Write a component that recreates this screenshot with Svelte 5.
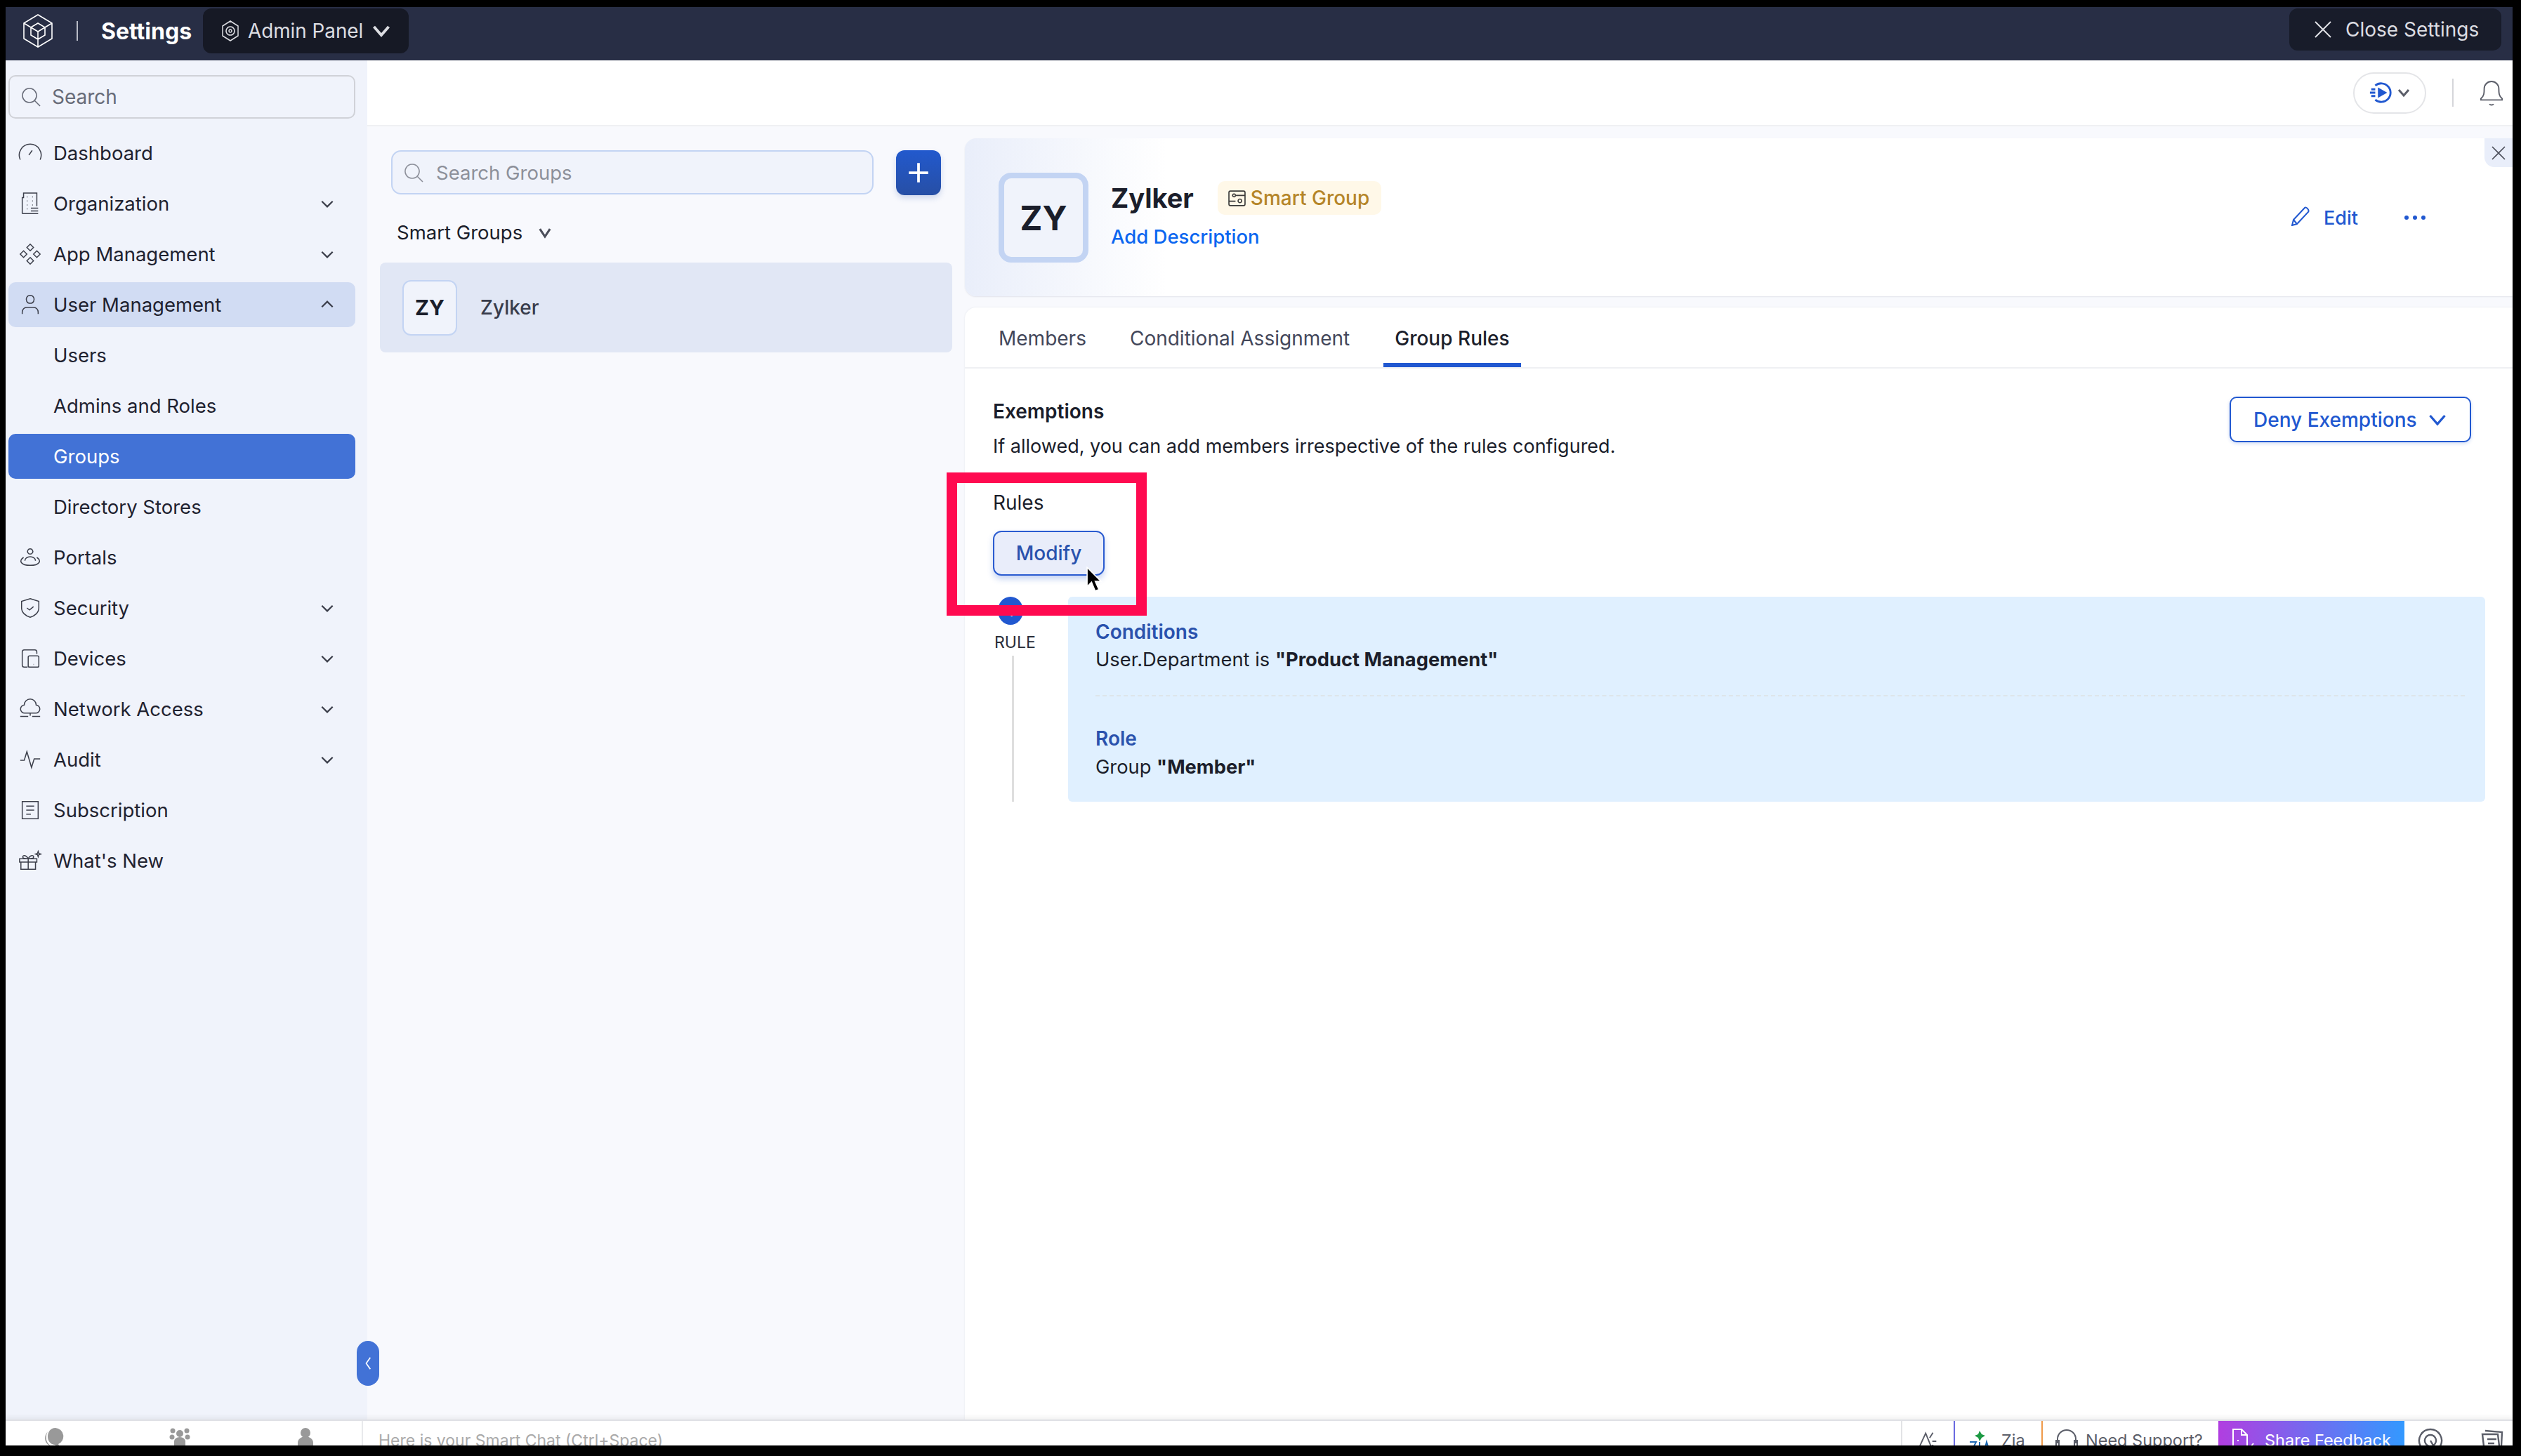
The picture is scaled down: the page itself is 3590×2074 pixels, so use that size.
<script>
  const nav = [
    { label: "Dashboard", icon: "dash" },
    { label: "Organization", icon: "org", arrow: "down" },
    { label: "App Management", icon: "app", arrow: "down" },
    { label: "User Management", icon: "user", arrow: "up", open: true },
    { label: "Users", sub: true },
    { label: "Admins and Roles", sub: true },
    { label: "Groups", sub: true, active: true },
    { label: "Directory Stores", sub: true },
    { label: "Portals", icon: "portal" },
    { label: "Security", icon: "shield", arrow: "down" },
    { label: "Devices", icon: "device", arrow: "down" },
    { label: "Network Access", icon: "cloud", arrow: "down" },
    { label: "Audit", icon: "audit", arrow: "down" },
    { label: "Subscription", icon: "receipt" },
    { label: "What's New", icon: "gift" }
  ];

  const paths = {
    dash: "M3 28A16.500 16.500 0 1 1 33 28M16 21l5-7",
    org: "M6 33V9h2V2h20v20M6 33h8M19 25h11M19 29h11M14 33h16M13 8h1M21 8h1M13 14h1M21 14h1M13 20h1M21 20h1M13 26h1",
    app: "M18 3l5 5-5 5-5-5zM18 23l5 5-5 5-5-5zM8 13l5 5-5 5-5-5zM28 13l5 5-5 5-5-5z",
    user: "M18 4a6 6 0 1 1-.01 0M6 32v-3a7 7 0 0 1 7-7h10a7 7 0 0 1 7 7v3",
    portal: "M18 5a4 4 0 1 1-.01 0M10 23a8 6 0 0 1 16 0M8 18c-8 5-4 12 10 12s18-7 10-12",
    shield: "M18 4l13 4v10c0 7-6 12-13 14C11 30 5 25 5 18V8zM13 18l4 3 6-5",
    device: "M14 31H9a3 3 0 0 1-3-3V8a3 3 0 0 1 3-3h16a3 3 0 0 1 3 3v3M17 14h12a2 2 0 0 1 2 2v13a2 2 0 0 1-2 2H17a2 2 0 0 1-2-2V16a2 2 0 0 1 2-2zM23 27h.5",
    cloud: "M10 24a6 6 0 0 1-1-12 9 9 0 0 1 18 0 6 6 0 0 1-1 12zM18 24v4M3 29h12M21 29h12",
    audit: "M3 19h6l4-13 7 24 4-13h9",
    receipt: "M6 5h24v26H6zM12 12h12M12 18h12M12 24h7",
    gift: "M4 20h22v11H4zM2 15h26v5H2zM15 15v16M15 15c-3-6-9-6-8-2 0 2 4 2 8 2zM15 15c3-6 9-6 8-2 0 2-4 2-8 2zM30 4l1 3 3 1-3 1-1 3-1-3-3-1 3-1z"
  };
</script>

{#snippet chevron(dir)}
  <svg class="chev" viewBox="0 0 20 20" class:flip={dir === "up"}><path d="M3 7l7 7 7-7" /></svg>
{/snippet}

<div class="shell">
  <header class="top">
    <svg class="logo" viewBox="0 0 44 48"><path d="M22 1l20 12v22L22 47 2 35V13zM2 13l20 12 20-12M22 25v22M12 19l10-6 10 6-10 6zM12 19v11l10 6 10-6V19" /></svg>
    <span class="sep"></span>
    <span class="title">Settings</span>
    <div class="panel-pick">
      <svg viewBox="0 0 26 30"><path d="M13 1l11 7v14l-11 7-11-7V8zM13 9a6 6 0 1 1-.01 0M13 13a2 2 0 1 1-.01 0" /></svg>
      <span>Admin Panel</span>
      <svg class="pick-chev" viewBox="0 0 20 20"><path d="M3 6l7 8 7-8" /></svg>
    </div>
    <div class="close-btn">
      <svg viewBox="0 0 24 24"><path d="M1 1l22 22M23 1L1 23" /></svg>
      <span>Close Settings</span>
    </div>
  </header>

  <div class="middle">
    <aside class="sidebar">
      <div class="side-search">
        <svg class="search-ic" viewBox="0 0 28 28"><path d="M12 2a10 10 0 1 1-.01 0M19 19l8 8" /></svg>
        <span>Search</span>
      </div>
      <nav>
        {#each nav as item}
          <div class="row" class:open={item.open} class:active={item.active}>
            {#if item.icon}
              <svg class="row-ic" viewBox="0 0 36 36"><path d={paths[item.icon]} /></svg>
            {/if}
            <span class="row-label" class:sub={item.sub}>{item.label}</span>
            {#if item.arrow}
              {@render chevron(item.arrow)}
            {/if}
          </div>
        {/each}
      </nav>
      <div class="collapse">
        <svg viewBox="0 0 12 24"><path d="M10 2L3 12l7 10" /></svg>
      </div>
    </aside>

    <main class="main">
      <div class="utility">
        <div class="play-pill">
          <svg class="play" viewBox="0 0 36 36"><path d="M10 7.300A14 14 0 1 1 10 28.700" class="ring" /><path d="M14 10l14 8-14 8z" class="fill" /><path d="M4 13h6M2 18h8M4 23h6" class="ring" /></svg>
          <svg class="play-chev" viewBox="0 0 20 20"><path d="M3 6l7 8 7-8" /></svg>
        </div>
        <span class="util-sep"></span>
        <svg class="bell" viewBox="0 0 36 42"><path d="M2 30c5-4 5-9 5-15a11 11 0 0 1 22 0c0 6 0 11 5 15v2H2zM15 38c1 2 5 2 6 0" /></svg>
      </div>

      <div class="work">
        <section class="groups">
          <div class="group-tools">
            <div class="group-search">
              <svg class="search-ic" viewBox="0 0 28 28"><path d="M12 2a10 10 0 1 1-.01 0M19 19l8 8" /></svg>
              <span>Search Groups</span>
            </div>
            <div class="add"><svg viewBox="0 0 24 24"><path d="M12 1v22M1 12h22" /></svg></div>
          </div>
          <div class="group-type">
            <span>Smart Groups</span>
            <svg viewBox="0 0 20 20"><path d="M4 6l6 9 6-9" /></svg>
          </div>
          <div class="group-row">
            <div class="mini-av">ZY</div>
            <span>Zylker</span>
          </div>
        </section>

        <section class="detail">
          <div class="head-card">
            <div class="big-av"><span>ZY</span></div>
            <div class="head-text">
              <div class="name-line">
                <h1>Zylker</h1>
                <div class="badge">
                  <svg viewBox="0 0 24 24"><path d="M3 2h18a2 2 0 0 1 2 2v16a2 2 0 0 1-2 2H3a2 2 0 0 1-2-2V4a2 2 0 0 1 2-2zM10 8h13M8 6a2 2 0 1 1-.01 0M1 16h9M16 13a2.500 2.500 0 1 1-.01 0" /></svg>
                  <span>Smart Group</span>
                </div>
              </div>
              <div class="add-desc">Add Description</div>
            </div>
            <div class="head-actions">
              <svg class="pencil" viewBox="0 0 28 28"><path d="M1 27l2-8L19 2c2-2 7 3 5 6L8 25zM3 19l5 6" /></svg>
              <span class="edit">Edit</span>
              <span class="dots"><i></i><i></i><i></i></span>
            </div>
            <div class="head-x"><svg viewBox="0 0 20 20"><path d="M1 1l18 18M19 1L1 19" /></svg></div>
          </div>

          <div class="rules-card">
            <div class="tabs">
              <div class="tab">Members</div>
              <div class="tab">Conditional Assignment</div>
              <div class="tab current">Group Rules</div>
            </div>
            <div class="content">
              <div class="exempt">
                <div>
                  <h2>Exemptions</h2>
                  <p>If allowed, you can add members irrespective of the rules configured.</p>
                </div>
                <div class="deny">
                  <span>Deny Exemptions</span>
                  <svg viewBox="0 0 20 20"><path d="M3 6l7 8 7-8" /></svg>
                </div>
              </div>
              <div class="rules-title">Rules</div>
              <button class="modify">Modify</button>
              <div class="rule">
                <div class="rule-side">
                  <div class="num">1</div>
                  <div class="rule-tag">RULE</div>
                  <div class="rule-line"></div>
                </div>
                <div class="rule-box">
                  <h3>Conditions</h3>
                  <p>User.Department is <b>"Product Management"</b></p>
                  <div class="dash"></div>
                  <h3 class="role">Role</h3>
                  <p class="role-val">Group <b>"Member"</b></p>
                </div>
              </div>
              <div class="highlight"></div>
              <svg class="cursor" viewBox="0 0 22 34"><path d="M2 1v26l6-6 5 12 5-2-5-11h8z" /></svg>
            </div>
          </div>
        </section>
      </div>
    </main>
  </div>

  <footer class="foot">
    <div class="foot-left">
      <svg viewBox="0 0 30 32"><path d="M17 1a12 12 0 0 1 4 23l3 6-8-5C2 24 3 1 17 1zM6 6C0 13 1 22 8 26l-2 5 6-4C3 24 2 13 6 6z" /></svg>
      <svg viewBox="0 0 30 32"><circle cx="15" cy="9" r="5" /><circle cx="5" cy="5" r="3.500" /><circle cx="25" cy="5" r="3.500" /><circle cx="4" cy="14" r="3.500" /><circle cx="26" cy="14" r="3.500" /><path d="M7 32v-12a8 6 0 0 1 16 0v12z" /></svg>
      <svg viewBox="0 0 30 32"><circle cx="15" cy="8" r="7" /><path d="M4 32v-10a11 9 0 0 1 22 0v10z" /></svg>
    </div>
    <div class="foot-chat">Here is your Smart Chat (Ctrl+Space)</div>
    <div class="foot-cell megaphone">
      <svg viewBox="0 0 36 36"><path d="M3 31L14 7l9 22zM3 31l5 3 7-3M20 14l5-8M24 19h6M23 25l5 2" /></svg>
    </div>
    <div class="foot-cell zia">
      <svg viewBox="0 0 32 36"><path d="M2 20h9L3 36M16 20v16M22 36l4-16 5 16" class="zia-blue" /><path d="M16 4l3 5 5 2-5 3-3 5-2-5-5-3 5-2z" class="zia-green" /></svg>
      <span>Zia</span>
    </div>
    <div class="foot-cell support">
      <svg viewBox="0 0 34 36"><path d="M4 22V16a13 13 0 0 1 26 0v6" /><path d="M2 18h4v14H2zM28 18h4v14h-4z" /></svg>
      <span>Need Support?</span>
    </div>
    <div class="foot-cell share">
      <svg viewBox="0 0 34 36"><path d="M3 2h12l8 8v24H3zM15 2v8h8M9 18h2M9 26h8M24 32l8-10" /></svg>
      <span>Share Feedback</span>
    </div>
    <div class="foot-end">
      <svg viewBox="0 0 36 36"><path d="M18 2a16 16 0 1 0 .01 0M18 10a8 8 0 1 0 .01 0M18 18l7 12" /></svg>
      <svg viewBox="0 0 36 36"><path d="M5 9h22l3 25H8zM9 4l24 2-1 20M12 16h13M13 22h9" /></svg>
    </div>
  </footer>
</div>

<style>
  :global(body) {
    background: #000;
    height: 2074px;
    overflow: hidden;
    font-family: Inter, "Liberation Sans", sans-serif;
    color: #1b1e2b;
  }

  svg {
    fill: none;
    stroke: currentColor;
    stroke-width: 2;
    flex: none;
  }

  h1, h2, h3, p {
    margin: 0;
  }

  .shell {
    margin: 10px 12px 0 8px;
    height: 2049px;
    display: flex;
    flex-direction: column;
    background: #fff;
    overflow: hidden;
  }

  .top {
    height: 76px;
    flex: none;
    box-sizing: border-box;
    padding-bottom: 8px;
    background: #282e45;
    display: flex;
    align-items: center;
    color: #fff;
  }

  .logo {
    width: 44px;
    height: 48px;
    margin-left: 24px;
    stroke-width: 1.6;
  }

  .sep {
    width: 2px;
    height: 28px;
    background: #b9bcc6;
    margin: 0 33px;
  }

  .title {
    font-size: 32px;
    font-weight: 700;
    width: 145px;
  }

  .panel-pick {
    width: 293px;
    height: 64px;
    background: #161925;
    border-radius: 12px;
    display: flex;
    align-items: center;
    color: #dcdde2;
    font-size: 27.8px;
    box-sizing: border-box;
    padding-left: 26px;
  }

  .panel-pick svg {
    width: 26px;
    height: 30px;
    margin-right: 12px;
    stroke-width: 1.5;
  }

  .panel-pick .pick-chev {
    width: 30px;
    height: 30px;
    margin: 0 0 0 11px;
    stroke-width: 2.6;
  }

  .close-btn {
    margin-left: auto;
    margin-right: 16px;
    margin-top: -4px;
    width: 302px;
    height: 60px;
    box-sizing: border-box;
    padding-left: 36px;
    background: #181c2a;
    border-radius: 12px;
    display: flex;
    align-items: center;
    gap: 20px;
    font-size: 28px;
    color: #dcdde2;
  }

  .close-btn svg {
    width: 24px;
    height: 24px;
  }

  .middle {
    flex: 1;
    min-height: 0;
    display: flex;
  }

  .sidebar {
    width: 515px;
    flex: none;
    box-sizing: border-box;
    padding: 21px 17px 0 4px;
    background: #f0f3fb;
    position: relative;
  }

  .side-search {
    height: 62px;
    box-sizing: border-box;
    border: 2px solid #d0d2d8;
    border-radius: 10px;
    display: flex;
    align-items: center;
    gap: 16px;
    padding-left: 16px;
    font-size: 28px;
    color: #676b78;
  }

  .search-ic {
    width: 28px;
    height: 28px;
    stroke-width: 1.6;
  }

  nav {
    margin-top: 17px;
    display: flex;
    flex-direction: column;
    gap: 8px;
  }

  .row {
    height: 64px;
    display: flex;
    align-items: center;
    border-radius: 10px;
    padding: 0 29px 0 14px;
    font-size: 27.5px;
    color: #1f2230;
  }

  .row.open {
    background: #d1dcf3;
  }

  .row.active {
    background: #4272d6;
    color: #fff;
  }

  .row-ic {
    width: 34px;
    height: 34px;
    margin-right: 16px;
    stroke-width: 1.6;
    color: #3d404c;
  }

  .row-label.sub {
    margin-left: 50px;
  }

  .chev {
    width: 22px;
    height: 22px;
    margin-left: auto;
    color: #3a3d49;
  }

  .chev.flip {
    transform: rotate(180deg);
  }

  .collapse {
    position: absolute;
    left: 500px;
    top: 1824px;
    width: 32px;
    height: 64px;
    border-radius: 16px;
    background: #4272d6;
    color: #fff;
    display: flex;
    align-items: center;
    justify-content: center;
  }

  .collapse svg {
    width: 10px;
    height: 20px;
  }

  .main {
    flex: 1;
    min-width: 0;
    display: flex;
    flex-direction: column;
  }

  .utility {
    height: 94px;
    flex: none;
    box-sizing: border-box;
    border-bottom: 2px solid #eff0f3;
    display: flex;
    align-items: center;
    justify-content: flex-end;
    padding-right: 13px;
  }

  .play-pill {
    width: 104px;
    height: 59px;
    box-sizing: border-box;
    border: 2px solid #e4e5e8;
    border-radius: 30px;
    display: flex;
    align-items: center;
    justify-content: center;
    gap: 6px;
  }

  .play {
    width: 34px;
    height: 34px;
    color: #2158d0;
  }

  .play .ring {
    stroke-width: 3;
  }

  .play .fill {
    fill: #2158d0;
    stroke: none;
  }

  .play-chev {
    width: 20px;
    height: 20px;
    stroke-width: 3;
    color: #5b5e69;
  }

  .util-sep {
    width: 2px;
    height: 40px;
    background: #d5d6da;
    margin: 0 37px;
  }

  .bell {
    width: 34px;
    height: 40px;
    color: #5b5e69;
  }

  .work {
    flex: 1;
    min-height: 0;
    display: flex;
    background: #f8f9fd;
  }

  .groups {
    width: 849px;
    flex: none;
    box-sizing: border-box;
    padding: 34px 16px 0 18px;
  }

  .group-tools {
    display: flex;
    gap: 32px;
    padding-left: 16px;
  }

  .group-search {
    width: 687px;
    height: 63px;
    box-sizing: border-box;
    border: 2px solid #c3d4f3;
    border-radius: 14px;
    background: #f0f3fb;
    display: flex;
    align-items: center;
    gap: 18px;
    padding-left: 16px;
    font-size: 27.5px;
    color: #8d909a;
  }

  .add {
    width: 64px;
    height: 64px;
    border-radius: 12px;
    background: linear-gradient(#2259cd, #274fa5);
    box-shadow: 0 4px 8px rgba(40, 80, 170, 0.2);
    color: #fff;
    display: flex;
    align-items: center;
    justify-content: center;
  }

  .add svg {
    width: 30px;
    height: 30px;
    stroke-width: 3;
  }

  .group-type {
    display: flex;
    align-items: center;
    gap: 20px;
    height: 36px;
    margin: 35px 0 25px 24px;
    font-size: 27.5px;
  }

  .group-type svg {
    width: 24px;
    height: 24px;
    stroke-width: 2.6;
    color: #4b4e5a;
  }

  .group-row {
    height: 128px;
    box-sizing: border-box;
    background: #e1e7f5;
    border-radius: 8px;
    display: flex;
    align-items: center;
    gap: 33px;
    padding-left: 32px;
    font-size: 28px;
    font-weight: 500;
    color: #383c4b;
  }

  .mini-av {
    width: 78px;
    height: 79px;
    box-sizing: border-box;
    border: 2px solid #c3d4f3;
    border-radius: 12px;
    background: #f0f3fb;
    display: flex;
    align-items: center;
    justify-content: center;
    font-size: 30px;
    font-weight: 700;
    color: #1b1e2b;
  }

  .detail {
    flex: 1;
    min-width: 0;
    display: flex;
    flex-direction: column;
    padding-top: 17px;
    margin-left: 2px;
  }

  .head-card {
    height: 225px;
    flex: none;
    box-sizing: border-box;
    padding: 49px 0 0 48px;
    border-radius: 16px 0 0 16px;
    background: linear-gradient(90deg, #e9eefa, #fff 13%);
    box-shadow: 0 1px 2px rgba(30, 40, 70, 0.1);
    display: flex;
    position: relative;
  }

  .big-av {
    width: 128px;
    height: 128px;
    box-sizing: border-box;
    border: 8px solid #c3d4f3;
    border-radius: 18px;
    background: #f0f3fb;
    display: flex;
    align-items: center;
    justify-content: center;
    font-size: 48px;
    font-weight: 700;
  }

  .head-text {
    margin-left: 32px;
  }

  .name-line {
    display: flex;
    align-items: center;
    gap: 34px;
    margin-top: 12px;
    height: 48px;
  }

  h1 {
    font-size: 38px;
    font-weight: 700;
  }

  .badge {
    height: 48px;
    width: 233px;
    box-sizing: border-box;
    border-radius: 10px;
    background: #fff8e8;
    display: flex;
    align-items: center;
    gap: 7px;
    padding-left: 15px;
    font-size: 28px;
    font-weight: 500;
    color: #b58528;
  }

  .badge svg {
    width: 25px;
    height: 25px;
    color: #3a3a3a;
    stroke-width: 1.6;
  }

  .add-desc {
    margin-top: 14px;
    font-size: 27.5px;
    font-weight: 500;
    color: #0b66f0;
  }

  .head-actions {
    margin-left: auto;
    margin-right: 124px;
    margin-top: 48px;
    display: flex;
    align-items: flex-start;
    color: #2158d0;
    font-size: 27px;
    font-weight: 500;
  }

  .pencil {
    width: 28px;
    height: 28px;
    margin-right: 18px;
  }

  .dots {
    display: flex;
    gap: 6px;
    margin: 13px 0 0 66px;
  }

  .dots i {
    width: 6px;
    height: 6px;
    border-radius: 50%;
    background: #2158d0;
  }

  .head-x {
    position: absolute;
    right: 0;
    top: 0;
    width: 40px;
    height: 41px;
    background: #e9eefa;
    border-radius: 0 0 0 14px;
    display: flex;
    align-items: center;
    justify-content: center;
    color: #4b4e5a;
  }

  .head-x svg {
    width: 20px;
    height: 20px;
    stroke-width: 1.6;
  }

  .rules-card {
    flex: 1;
    margin-top: 16px;
    background: #fff;
    border-radius: 16px 0 0 0;
    box-shadow: 0 0 3px rgba(30, 40, 70, 0.08);
    display: flex;
    flex-direction: column;
  }

  .tabs {
    height: 87px;
    flex: none;
    box-sizing: border-box;
    border-bottom: 2px solid #eff0f3;
    padding-left: 32px;
    display: flex;
    gap: 30px;
  }

  .tab {
    padding: 27px 16px 0;
    font-size: 28px;
    color: #43475a;
  }

  .tab.current {
    margin-left: 2px;
    color: #1b1e2b;
    font-weight: 500;
    box-shadow: inset 0 -6px 0 #2158d0;
  }

  .content {
    position: relative;
    padding: 43px 39px 0 40px;
  }

  .exempt {
    display: flex;
    justify-content: space-between;
    align-items: flex-start;
  }

  h2 {
    font-size: 28px;
    font-weight: 600;
    line-height: 36px;
  }

  .exempt p {
    margin-top: 14px;
    font-size: 27px;
    line-height: 36px;
  }

  .deny {
    width: 344px;
    height: 65px;
    margin: -3px 20px 0 0;
    box-sizing: border-box;
    border: 2px solid #2158d0;
    border-radius: 10px;
    box-shadow: 0 2px 5px rgba(33, 88, 208, 0.2);
    display: flex;
    align-items: center;
    gap: 14px;
    padding-left: 32px;
    font-size: 28px;
    font-weight: 500;
    color: #2158d0;
  }

  .deny svg {
    width: 30px;
    height: 30px;
    stroke-width: 2.2;
  }

  .rules-title {
    margin-top: 44px;
    font-size: 28px;
    line-height: 36px;
  }

  .modify {
    display: block;
    margin-top: 22px;
    width: 159px;
    height: 64px;
    padding: 0;
    border: 2px solid #2a5bd0;
    border-radius: 12px;
    background: #e9edfa;
    box-shadow: 0 5px 8px rgba(33, 88, 208, 0.25);
    font: 500 28px Inter, "Liberation Sans", sans-serif;
    color: #2a52ad;
  }

  .rule {
    display: flex;
    margin-top: 30px;
  }

  .rule-side {
    width: 107px;
    flex: none;
    display: flex;
    flex-direction: column;
  }

  .num {
    width: 36px;
    height: 40px;
    margin-left: 7px;
    border-radius: 50%;
    background: #2158d0;
    color: #fff;
    font-size: 22px;
    text-align: center;
    line-height: 40px;
  }

  .rule-tag {
    margin: 10px 0 0 2px;
    height: 30px;
    line-height: 30px;
    font-size: 23px;
    color: #2a2d38;
  }

  .rule-line {
    flex: 1;
    width: 3px;
    margin: 4px 0 0 27px;
    background: #dedede;
  }

  .rule-box {
    flex: 1;
    box-sizing: border-box;
    height: 292px;
    padding: 32px 29px 0 39px;
    background: #e0f0ff;
    border-radius: 6px;
    font-size: 27.3px;
    line-height: 36px;
  }

  h3 {
    font-size: 28px;
    font-weight: 600;
    color: #2a52ad;
  }

  .rule-box p {
    margin-top: 4px;
  }

  .rule-box b {
    font-weight: 700;
  }

  .dash {
    margin-top: 32px;
    border-top: 2px dashed #dde5ea;
  }

  h3.role {
    margin-top: 42px;
  }

  .rule-box p.role-val {
    margin-top: 5px;
  }

  .highlight {
    position: absolute;
    left: -26px;
    top: 148px;
    width: 285px;
    height: 204px;
    box-sizing: border-box;
    border: 15px solid #ff0a50;
  }

  .cursor {
    position: absolute;
    left: 172px;
    top: 282px;
    width: 23px;
    height: 36px;
    fill: #000;
    stroke: #fff;
    stroke-width: 1.5;
  }

  .foot {
    height: 37px;
    flex: none;
    box-sizing: border-box;
    border-top: 2px solid #dfe0e5;
    box-shadow: 0 -4px 6px rgba(0, 0, 0, 0.05);
    position: relative;
    display: flex;
    overflow: hidden;
    font-size: 23.5px;
    color: #5b5e69;
    line-height: 36px;
  }

  .foot-left {
    width: 509px;
    flex: none;
    box-sizing: border-box;
    border-right: 2px solid #e8e9ec;
    position: relative;
    display: flex;
    justify-content: space-between;
    padding: 9px 65px 0 54px;
  }

  .foot-left svg {
    width: 30px;
    height: 32px;
    fill: #999;
    stroke: none;
  }

  .foot-chat {
    flex: 1;
    padding: 10px 0 0 22px;
    font-size: 23px;
    color: #aaa;
  }

  .foot-cell {
    flex: none;
    box-sizing: border-box;
    display: flex;
    align-items: flex-start;
    padding-top: 10px;
    gap: 12px;
  }

  .foot-cell svg {
    width: 34px;
    height: 36px;
  }

  .megaphone {
    width: 75px;
    border-left: 2px solid #e2e3e6;
    padding-left: 20px;
  }

  .zia {
    width: 125px;
    border-left: 2px solid #6a6ae0;
    padding-left: 18px;
    gap: 14px;
  }

  .zia .zia-blue {
    stroke: #1e6ab4;
  }

  .zia .zia-green {
    fill: #1d9a44;
    stroke: none;
  }

  .support {
    width: 252px;
    border-left: 2px solid #ef9a4a;
    padding-left: 17px;
    gap: 10px;
  }

  .share {
    width: 265px;
    padding-left: 18px;
    background: linear-gradient(90deg, #b13ee0, #3399ff);
    color: #fff;
    gap: 14px;
  }

  .foot-end {
    flex: none;
    width: 154px;
    box-sizing: border-box;
    padding: 10px 12px 0 19px;
    display: flex;
    justify-content: space-between;
  }

  .foot-end svg {
    width: 36px;
    height: 36px;
    stroke-width: 2.4;
  }
</style>
